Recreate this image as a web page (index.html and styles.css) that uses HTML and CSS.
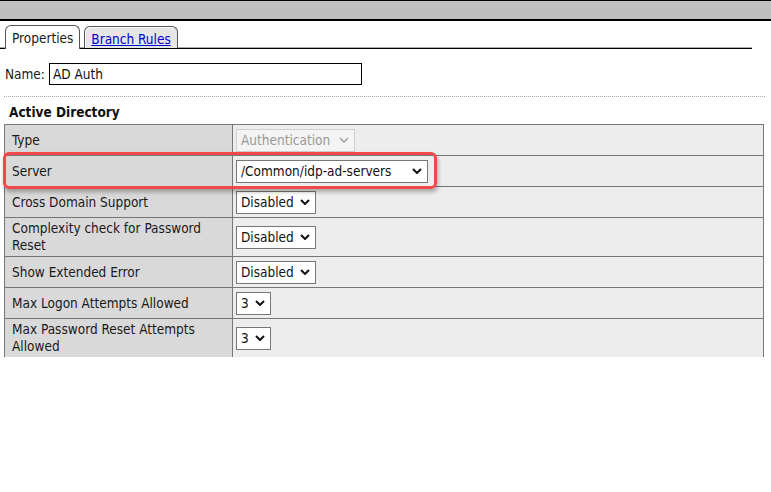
FILE: index.html
```html
<!DOCTYPE html>
<html>
<head>
<meta charset="utf-8">
<link rel="stylesheet" href="styles.css">
</head>
<body>
<div class="topbar"></div>
<div class="tabs">
  <div class="tab active">Properties</div>
  <div class="tab"><a href="#">Branch Rules</a></div>
</div>
<div class="name-row">
  <label class="name-label">Name:</label>
  <div class="name-input">AD Auth</div>
</div>
<div class="dotted"></div>
<h2 class="section-title">Active Directory</h2>
<div class="table-wrap">
  <table class="props">
    <tr>
      <td class="lbl">Type</td>
      <td class="val"><span class="sel disabled sel-auth"><span>Authentication</span><svg class="chev" viewBox="0 0 10 6"><path d="M1 1 L5 5 L9 1"/></svg></span></td>
    </tr>
    <tr>
      <td class="lbl">Server</td>
      <td class="val"><span class="sel sel-server"><span>/Common/idp-ad-servers</span><svg class="chev" viewBox="0 0 10 6"><path d="M1 1 L5 5 L9 1"/></svg></span></td>
    </tr>
    <tr>
      <td class="lbl">Cross Domain Support</td>
      <td class="val"><span class="sel"><span>Disabled</span><svg class="chev" viewBox="0 0 10 6"><path d="M1 1 L5 5 L9 1"/></svg></span></td>
    </tr>
    <tr class="tall">
      <td class="lbl">Complexity check for Password Reset</td>
      <td class="val"><span class="sel"><span>Disabled</span><svg class="chev" viewBox="0 0 10 6"><path d="M1 1 L5 5 L9 1"/></svg></span></td>
    </tr>
    <tr>
      <td class="lbl">Show Extended Error</td>
      <td class="val"><span class="sel"><span>Disabled</span><svg class="chev" viewBox="0 0 10 6"><path d="M1 1 L5 5 L9 1"/></svg></span></td>
    </tr>
    <tr>
      <td class="lbl">Max Logon Attempts Allowed</td>
      <td class="val"><span class="sel"><span>3</span><svg class="chev" viewBox="0 0 10 6"><path d="M1 1 L5 5 L9 1"/></svg></span></td>
    </tr>
    <tr class="tall">
      <td class="lbl">Max Password Reset Attempts Allowed</td>
      <td class="val"><span class="sel"><span>3</span><svg class="chev" viewBox="0 0 10 6"><path d="M1 1 L5 5 L9 1"/></svg></span></td>
    </tr>
  </table>
  <div class="highlight"></div>
</div>
</body>
</html>
```
FILE: styles.css
```css
html, body {
  margin: 0;
  padding: 0;
  background: #fff;
}
body {
  font-family: "DejaVu Sans Condensed", "DejaVu Sans", sans-serif;
  font-stretch: condensed;
  font-size: 13.5px;
  color: #1a1a1a;
  width: 771px;
  height: 492px;
  overflow: hidden;
}
.topbar {
  height: 18px;
  background: #c0c0c0;
  border-top: 1px solid #000;
  border-bottom: 2px solid #000;
}
.tabs {
  display: flex;
  align-items: flex-end;
  gap: 4px;
  margin-top: 4px;
  width: 747px;
  padding-left: 5px;
  height: 23px;
  border-bottom: 1px solid #000;
  box-shadow: 0 -1px 0 #aaa inset;
}
.tab {
  box-sizing: border-box;
  height: 22px;
  padding: 2px 6px 0;
  border: 1px solid #555;
  border-bottom: none;
  border-radius: 6px 6px 0 0;
  background: #e6e6e6;
  line-height: 20px;
  box-shadow: inset 1px 1px 0 #fff;
}
.tab.active {
  height: 24px;
  background: #fff;
  position: relative;
  z-index: 1;
  margin-bottom: -1px;
}
.tab a {
  color: #0000cc;
  text-decoration: underline;
}
.name-row {
  display: flex;
  align-items: center;
  gap: 4px;
  margin-top: 14px;
  padding-left: 5px;
}
.name-input {
  width: 308px;
  height: 20px;
  border: 1px solid #000;
  padding: 0 0 0 3px;
  line-height: 20px;
  color: #111;
}
.dotted {
  margin: 11px 6px 0 4px;
  border-top: 1px dotted #aaa;
}
.section-title {
  margin: 7px 0 0 9px;
  font-size: 13.5px;
  font-weight: bold;
  line-height: 17px;
  color: #111;
}
.table-wrap {
  position: relative;
  margin: 3px 0 0 4px;
  width: 760px;
  height: 233px;
}
.props {
  width: 760px;
  border-collapse: collapse;
  table-layout: fixed;
  clip-path: inset(0 0 1px 0);
}
.props td {
  border: 1px solid #777;
  height: 30px;
  padding: 0;
  vertical-align: middle;
}
.props tr.tall td {
  height: 38px;
}
.props td.lbl {
  width: 220px;
  background: #d9d9d9;
  padding-left: 7px;
  line-height: 17px;
}
.props td.val {
  background: #ededed;
  padding-left: 3px;
}
.sel {
  display: inline-flex;
  align-items: center;
  gap: 6px;
  height: 21px;
  padding: 0 5px 0 4px;
  border: 1px solid #777;
  background: #fff;
  color: #111;
  vertical-align: middle;
}
.sel-server {
  width: 181px;
  justify-content: space-between;
}
.sel.disabled {
  border-color: #d0d0d0;
  background: #f4f4f4;
  color: #999;
}
.sel-auth {
  gap: 9px;
}
.chev {
  width: 10px;
  height: 6px;
  fill: none;
  stroke: #111;
  stroke-width: 2;
}
.sel.disabled .chev {
  stroke: #999;
  stroke-width: 1.4;
}
.highlight {
  position: absolute;
  left: -1px;
  top: 28px;
  width: 428px;
  height: 31px;
  border: 3px solid #f2474b;
  border-radius: 6px;
  box-shadow: 1px 3px 4px rgba(0,0,0,0.3);
  pointer-events: none;
}
```
